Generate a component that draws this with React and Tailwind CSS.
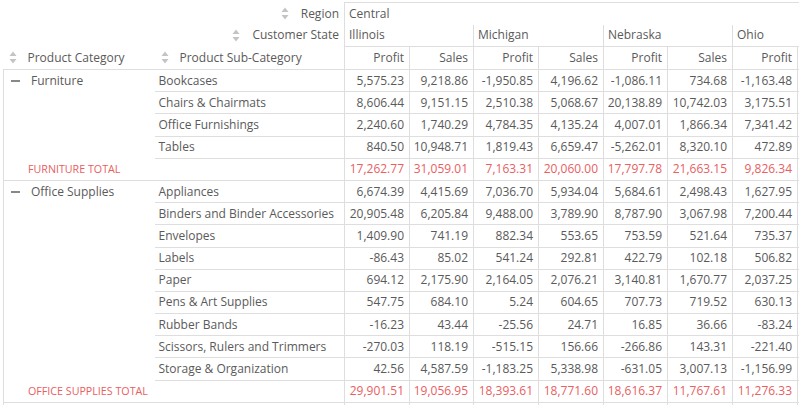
const STATES = ["Illinois", "Michigan", "Nebraska", "Ohio"];

const GROUPS = [
  {
    name: "Furniture",
    rows: [
      ["Bookcases", ["5,575.23", "9,218.86", "-1,950.85", "4,196.62", "-1,086.11", "734.68", "-1,163.48", "3,871.20"]],
      ["Chairs & Chairmats", ["8,606.44", "9,151.15", "2,510.38", "5,068.67", "20,138.89", "10,742.03", "3,175.51", "6,402.88"]],
      ["Office Furnishings", ["2,240.60", "1,740.29", "4,784.35", "4,135.24", "4,007.01", "1,866.34", "7,341.42", "5,210.76"]],
      ["Tables", ["840.50", "10,948.71", "1,819.43", "6,659.47", "-5,262.01", "8,320.10", "472.89", "4,118.35"]],
    ],
    total: ["17,262.77", "31,059.01", "7,163.31", "20,060.00", "17,797.78", "21,663.15", "9,826.34", "19,603.19"],
  },
  {
    name: "Office Supplies",
    rows: [
      ["Appliances", ["6,674.39", "4,415.69", "7,036.70", "5,934.04", "5,684.61", "2,498.43", "1,627.95", "2,904.17"]],
      ["Binders and Binder Accessories", ["20,905.48", "6,205.84", "9,488.00", "3,789.90", "8,787.90", "3,067.98", "7,200.44", "3,514.62"]],
      ["Envelopes", ["1,409.90", "741.19", "882.34", "553.65", "753.59", "521.64", "735.37", "488.20"]],
      ["Labels", ["-86.43", "85.02", "541.24", "292.81", "422.79", "102.18", "506.82", "210.44"]],
      ["Paper", ["694.12", "2,175.90", "2,164.05", "2,076.21", "3,140.81", "1,670.77", "2,037.25", "1,902.33"]],
      ["Pens & Art Supplies", ["547.75", "684.10", "5.24", "604.65", "707.73", "719.52", "630.13", "655.90"]],
      ["Rubber Bands", ["-16.23", "43.44", "-25.56", "24.71", "16.85", "36.66", "-83.24", "40.12"]],
      ["Scissors, Rulers and Trimmers", ["-270.03", "118.19", "-515.15", "156.66", "-266.86", "143.31", "-221.40", "131.07"]],
      ["Storage & Organization", ["42.56", "4,587.59", "-1,183.25", "5,338.98", "-631.05", "3,007.13", "-1,156.99", "4,120.45"]],
    ],
    total: ["29,901.51", "19,056.95", "18,393.61", "18,771.60", "18,616.37", "11,767.61", "11,276.33", "13,965.30"],
  },
];

const NUM_W = ["w-[65px]", "w-[64px]", "w-[65px]", "w-[65px]", "w-[64px]", "w-[65px]", "w-[65px]", "w-[65px]"];

function SortIcon() {
  return (
    <svg width="8" height="13" viewBox="0 0 8 13" className="shrink-0">
      <path d="M4 0.5 L7.5 5 L0.5 5 Z" fill="#c4c4c4" />
      <path d="M4 12.5 L7.5 8 L0.5 8 Z" fill="#c4c4c4" />
    </svg>
  );
}

function Collapse() {
  return <span className="inline-block w-[9px] h-[2px] bg-[#888] align-middle" />;
}

const cellB = "border border-[#dedede]";

export default function App() {
  return (
    <div className="w-[799px] h-[405px] overflow-hidden bg-white font-['Open_Sans',sans-serif] text-[12px] text-[#5a5a5a] pt-[2px]">
      <table className="table-fixed border-collapse w-[859px] ml-[3px] leading-none">
        <colgroup>
          <col className="w-[151px]" />
          <col className="w-[190px]" />
          {NUM_W.map((w, i) => (
            <col key={i} className={w} />
          ))}
        </colgroup>
        <thead>
          <tr className="h-[22px]">
            <td colSpan={2} className="pr-[5px]">
              <div className="flex items-center justify-end gap-[12px]">
                <SortIcon />
                <span>Region</span>
              </div>
            </td>
            <td colSpan={8} className="border-l border-t border-[#dedede] px-[4px]">
              Central
            </td>
          </tr>
          <tr className="h-[22px]">
            <td colSpan={2} className="pr-[5px] pb-[1px]">
              <div className="flex items-center justify-end gap-[12px]">
                <SortIcon />
                <span>Customer State</span>
              </div>
            </td>
            {STATES.map((s) => (
              <td key={s} colSpan={2} className="border-l border-[#dedede] px-[4px] pb-[1px]">
                {s}
              </td>
            ))}
          </tr>
          <tr className="h-[23px] border-b border-[#dedede]">
            <td className="pl-[5px]">
              <div className="flex items-center gap-[11px]">
                <SortIcon />
                <span>Product Category</span>
              </div>
            </td>
            <td className="pl-[6px]">
              <div className="flex items-center gap-[11px]">
                <SortIcon />
                <span>Product Sub-Category</span>
              </div>
            </td>
            {NUM_W.map((_, i) => (
              <td key={i} className={`${cellB} text-right pr-[5px]`}>
                {i % 2 === 0 ? "Profit" : "Sales"}
              </td>
            ))}
          </tr>
        </thead>
        <tbody>
          {GROUPS.map((g) => (
            <Group key={g.name} g={g} />
          ))}
          <tr className="h-[22.2px]">
            <td className="border-l border-[#dedede] pl-[7px]">
              <div className="flex items-center gap-[11px]">
                <Collapse />
                <span>Technology</span>
              </div>
            </td>
            <td className={`${cellB} border-l-0 pl-[4px]`}>Computer Peripherals</td>
            {NUM_W.map((_, i) => (
              <td key={i} className={`${cellB} text-right pr-[5px]`}>
                0.00
              </td>
            ))}
          </tr>
        </tbody>
      </table>
    </div>
  );
}

function Group({ g }) {
  return (
    <>
      {g.rows.map(([sub, vals], ri) => (
        <tr key={sub} className="h-[22.2px]">
          {ri === 0 && (
            <td rowSpan={g.rows.length} className="border-l border-[#dedede] align-top pl-[7px] pt-[5px]">
              <div className="flex items-center gap-[11px]">
                <Collapse />
                <span>{g.name}</span>
              </div>
            </td>
          )}
          <td className="border-b border-t border-r border-[#dedede] pl-[4px] whitespace-nowrap">{sub}</td>
          {vals.map((v, i) => (
            <td key={i} className={`${cellB} text-right pr-[5px] whitespace-nowrap`}>
              {v}
            </td>
          ))}
        </tr>
      ))}
      <tr className="h-[22.2px] border-b border-[#dedede]">
        <td className="border-l border-[#dedede] pl-[24px] text-[10.7px] text-[#e8605f] uppercase whitespace-nowrap">
          {g.name} Total
        </td>
        <td className="border-t border-r border-[#dedede]" />
        {g.total.map((v, i) => (
          <td key={i} className={`${cellB} text-right pr-[5px] text-[#e8605f] whitespace-nowrap`}>
            {v}
          </td>
        ))}
      </tr>
    </>
  );
}
